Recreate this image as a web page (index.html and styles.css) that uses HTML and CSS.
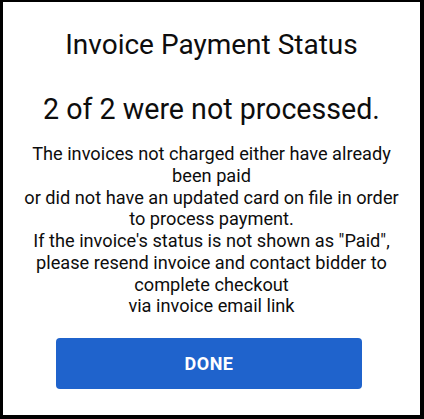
FILE: index.html
```html
<!DOCTYPE html>
<html lang="en">
<head>
  <meta charset="UTF-8">
  <meta name="viewport" content="width=device-width, initial-scale=1.0">
  <title>Invoice Payment Status</title>
  <link rel="stylesheet" href="styles.css">
</head>
<body>
  <div class="dialog">
    <h2 class="dialog-title">Invoice Payment Status</h2>
    <h3 class="dialog-summary">2 of 2 were not processed.</h3>
    <p class="dialog-text">
      The invoices not charged either have already been paid<br>
      or did not have an updated card on file in order to process payment.<br>
      If the invoice's status is not shown as "Paid",<br>
      please resend invoice and contact bidder to complete checkout<br>
      via invoice email link
    </p>
    <div class="dialog-actions">
      <button class="done-btn" type="button">DONE</button>
    </div>
  </div>
</body>
</html>
```

FILE: styles.css
```css
body {
  margin: 0;
  font-family: Roboto, 'Liberation Sans', sans-serif;
  color: #0d0d0d;
  background: #fff;
}

.dialog {
  box-sizing: border-box;
  width: 424px;
  height: 419px;
  border-style: solid;
  border-color: #000;
  border-width: 2px 4px 4px 3px;
  padding: 27px 14px 0 14px;
  text-align: center;
}

.dialog-title {
  margin: 0;
  font-size: 28px;
  font-weight: 400;
  line-height: 32px;
}

.dialog-summary {
  margin: 30px 0 0;
  font-size: 28.6px;
  font-weight: 400;
  line-height: 36px;
}

.dialog-text {
  margin: 16px 0 0;
  font-size: 18.2px;
  line-height: 21.75px;
}

.dialog-actions {
  padding: 0 44px 0 39px;
  margin-top: 21px;
}

.done-btn {
  display: block;
  width: 100%;
  height: 51px;
  border: none;
  border-radius: 4px;
  background: #1f63cc;
  color: #fff;
  font-family: Roboto, sans-serif;
  font-weight: 700;
  font-size: 18px;
  letter-spacing: 0.5px;
  cursor: pointer;
}
```
